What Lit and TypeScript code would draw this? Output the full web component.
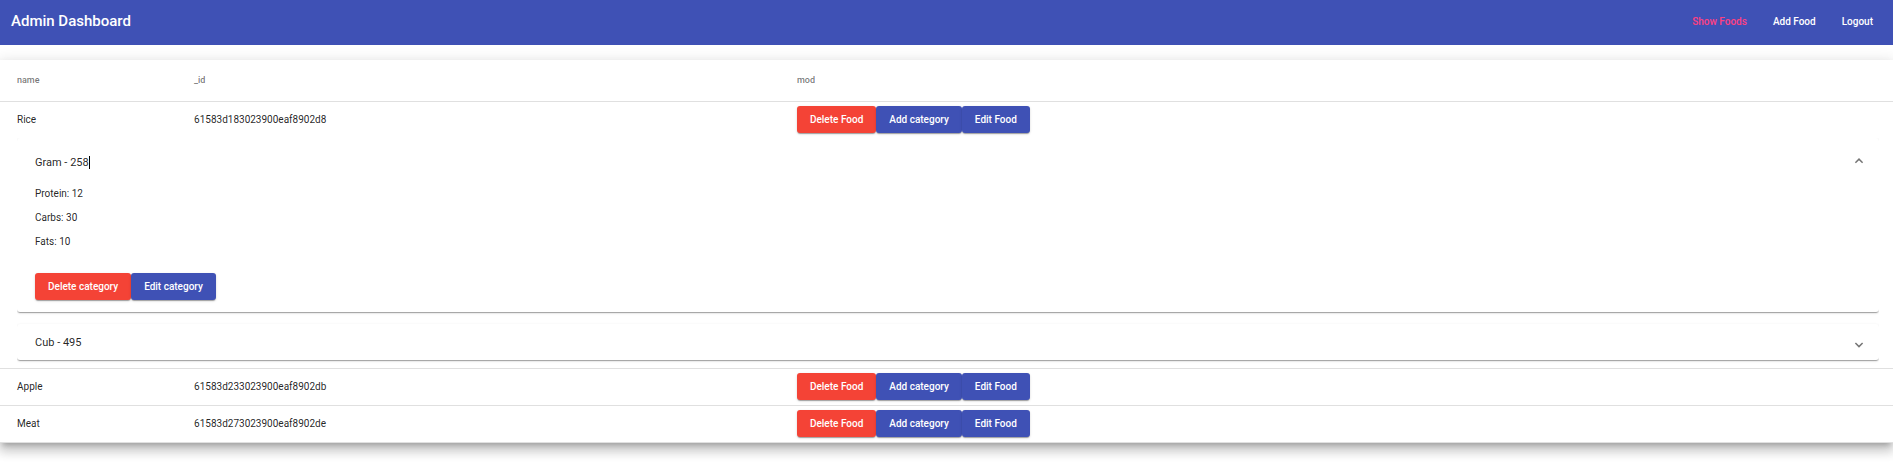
import { LitElement, html, css, nothing } from "lit";
import { customElement, property, state } from "lit/decorators.js";

interface Category {
  name: string;
  calories: number;
  protein: number;
  carbs: number;
  fats: number;
}

interface Food {
  name: string;
  id: string;
  categories: Category[];
}

const FOODS: Food[] = [
  {
    name: "Rice",
    id: "61583d183023900eaf8902d8",
    categories: [
      { name: "Gram", calories: 258, protein: 12, carbs: 30, fats: 10 },
      { name: "Cub", calories: 495, protein: 15, carbs: 45, fats: 12 },
    ],
  },
  { name: "Apple", id: "61583d233023900eaf8902db", categories: [] },
  { name: "Meat", id: "61583d273023900eaf8902de", categories: [] },
];

const buttonStyles = css`
  .actions {
    display: flex;
  }
  .btn {
    height: 27px;
    padding: 0 13px;
    border: 0;
    border-radius: 3px;
    background: #3f51b5;
    color: #fff;
    font: 500 10px/27px Roboto, sans-serif;
    white-space: nowrap;
    cursor: pointer;
    box-shadow: 0 2px 1px -1px rgba(0, 0, 0, 0.2), 0 1px 1px rgba(0, 0, 0, 0.14),
      0 1px 3px rgba(0, 0, 0, 0.12);
  }
  .warn {
    background: #f44336;
  }
`;

@customElement("category-panel")
export class CategoryPanel extends LitElement {
  @property({ attribute: false }) category!: Category;
  @property({ type: Boolean }) open = false;
  @property({ type: Boolean }) caret = false;

  static styles = [
    buttonStyles,
    css`
      :host {
        display: block;
        border-radius: 3px;
        background: #fff;
        color: rgba(0, 0, 0, 0.87);
        box-shadow: 0 2px 1px -1px rgba(0, 0, 0, 0.2),
          0 1px 1px rgba(0, 0, 0, 0.14), 0 1px 3px rgba(0, 0, 0, 0.12);
      }
      .head {
        display: flex;
        align-items: center;
        justify-content: space-between;
        width: 100%;
        height: 36px;
        padding: 2px 15px 0 18px;
        border: 0;
        background: none;
        color: inherit;
        font: 400 11px/16px Roboto, sans-serif;
        text-align: left;
        cursor: pointer;
      }
      .head.open {
        height: 48px;
      }
      .title {
        position: relative;
      }
      .caret {
        position: absolute;
        top: 1px;
        right: -1px;
        width: 1px;
        height: 13px;
        background: #000;
      }
      .chevron {
        width: 10px;
        height: 10px;
        fill: none;
        stroke: rgba(0, 0, 0, 0.54);
        stroke-width: 1.5;
      }
      .body {
        padding: 0 18px 12px;
        font-size: 10px;
        line-height: 15px;
      }
      .fact {
        margin: 0 0 9px;
      }
      .actions {
        padding-top: 15px;
      }
    `,
  ];

  render() {
    const c = this.category;
    return html`
      <button
        class="head ${this.open ? "open" : ""}"
        aria-expanded=${this.open ? "true" : "false"}
        @click=${() => (this.open = !this.open)}
      >
        <span class="title"
          >${c.name} - ${c.calories}${this.caret
            ? html`<span class="caret"></span>`
            : nothing}</span
        >
        <svg class="chevron" viewBox="0 0 10 10" aria-hidden="true">
          <path d=${this.open ? "M1.4 4.7 5 1.1 8.6 4.7" : "M1.4 5 5 8.6 8.6 5"} />
        </svg>
      </button>
      ${this.open
        ? html`<div class="body">
            <p class="fact">Protein: ${c.protein}</p>
            <p class="fact">Carbs: ${c.carbs}</p>
            <p class="fact">Fats: ${c.fats}</p>
            <div class="actions">
              <button class="btn warn">Delete category</button>
              <button class="btn">Edit category</button>
            </div>
          </div>`
        : nothing}
    `;
  }
}

@customElement("app-root")
export class AppRoot extends LitElement {
  @state() private foods = FOODS;

  static styles = [
    buttonStyles,
    css`
      :host {
        display: block;
        min-height: 100vh;
        overflow: hidden;
        background: #fff;
        color: rgba(0, 0, 0, 0.87);
        font: 400 10px/15px Roboto, sans-serif;
      }
      .toolbar {
        display: flex;
        align-items: center;
        justify-content: space-between;
        height: 45px;
        padding: 0 7px 0 11px;
        background: #3f51b5;
        color: #fff;
      }
      .brand {
        margin: 0;
        padding-bottom: 3px;
        font-size: 15px;
        line-height: 24px;
        font-weight: 500;
      }
      .nav {
        display: flex;
        padding-bottom: 2px;
      }
      .link {
        padding: 0 13px;
        color: #fff;
        font-weight: 500;
        line-height: 27px;
        text-decoration: none;
      }
      .active {
        color: #ff4081;
      }
      .foods {
        width: 100%;
        margin-top: 15px;
        border-collapse: separate;
        border-spacing: 0;
        table-layout: fixed;
        background: #fff;
        box-shadow: 0 5px 5px -3px rgba(0, 0, 0, 0.2),
          0 8px 10px 1px rgba(0, 0, 0, 0.14), 0 3px 14px 2px rgba(0, 0, 0, 0.12);
      }
      .heading {
        height: 41px;
        padding: 0;
        border-bottom: 1px solid #e0e0e0;
        color: rgba(0, 0, 0, 0.54);
        font-size: 9px;
        font-weight: 500;
        text-align: left;
      }
      .cell {
        padding: 4px 0 5px;
        border-bottom: 1px solid #e0e0e0;
      }
      .parent {
        border-bottom: 0;
      }
      .first {
        padding-left: 17px;
      }
      .col-name {
        width: 10.25%;
      }
      .col-id {
        width: 31.85%;
      }
      .detail {
        padding: 0 14px 0 17px;
        border-bottom: 1px solid #e0e0e0;
      }
      .panels {
        display: flex;
        flex-direction: column;
        gap: 12px;
        padding-bottom: 8px;
        overflow: hidden;
      }
    `,
  ];

  private renderFood(food: Food) {
    const expanded = food.categories.length > 0;
    const cell = expanded ? "cell parent" : "cell";
    return html`
      <tr>
        <td class="${cell} first">${food.name}</td>
        <td class=${cell}>${food.id}</td>
        <td class=${cell}>
          <div class="actions">
            <button class="btn warn">Delete Food</button>
            <button class="btn">Add category</button>
            <button class="btn">Edit Food</button>
          </div>
        </td>
      </tr>
      ${expanded
        ? html`<tr>
            <td class="detail" colspan="3">
              <div class="panels">
                ${food.categories.map(
                  (c, i) => html`<category-panel
                    .category=${c}
                    ?open=${i === 0}
                    ?caret=${i === 0}
                  ></category-panel>`
                )}
              </div>
            </td>
          </tr>`
        : nothing}
    `;
  }

  render() {
    return html`
      <header class="toolbar">
        <h1 class="brand">Admin Dashboard</h1>
        <nav class="nav">
          <a class="link active" href="#foods">Show Foods</a>
          <a class="link" href="#add">Add Food</a>
          <a class="link" href="#logout">Logout</a>
        </nav>
      </header>
      <table class="foods">
        <colgroup>
          <col class="col-name" />
          <col class="col-id" />
          <col />
        </colgroup>
        <thead>
          <tr>
            <th class="heading first">name</th>
            <th class="heading">_id</th>
            <th class="heading">mod</th>
          </tr>
        </thead>
        <tbody>
          ${this.foods.map((food) => this.renderFood(food))}
        </tbody>
      </table>
    `;
  }
}
